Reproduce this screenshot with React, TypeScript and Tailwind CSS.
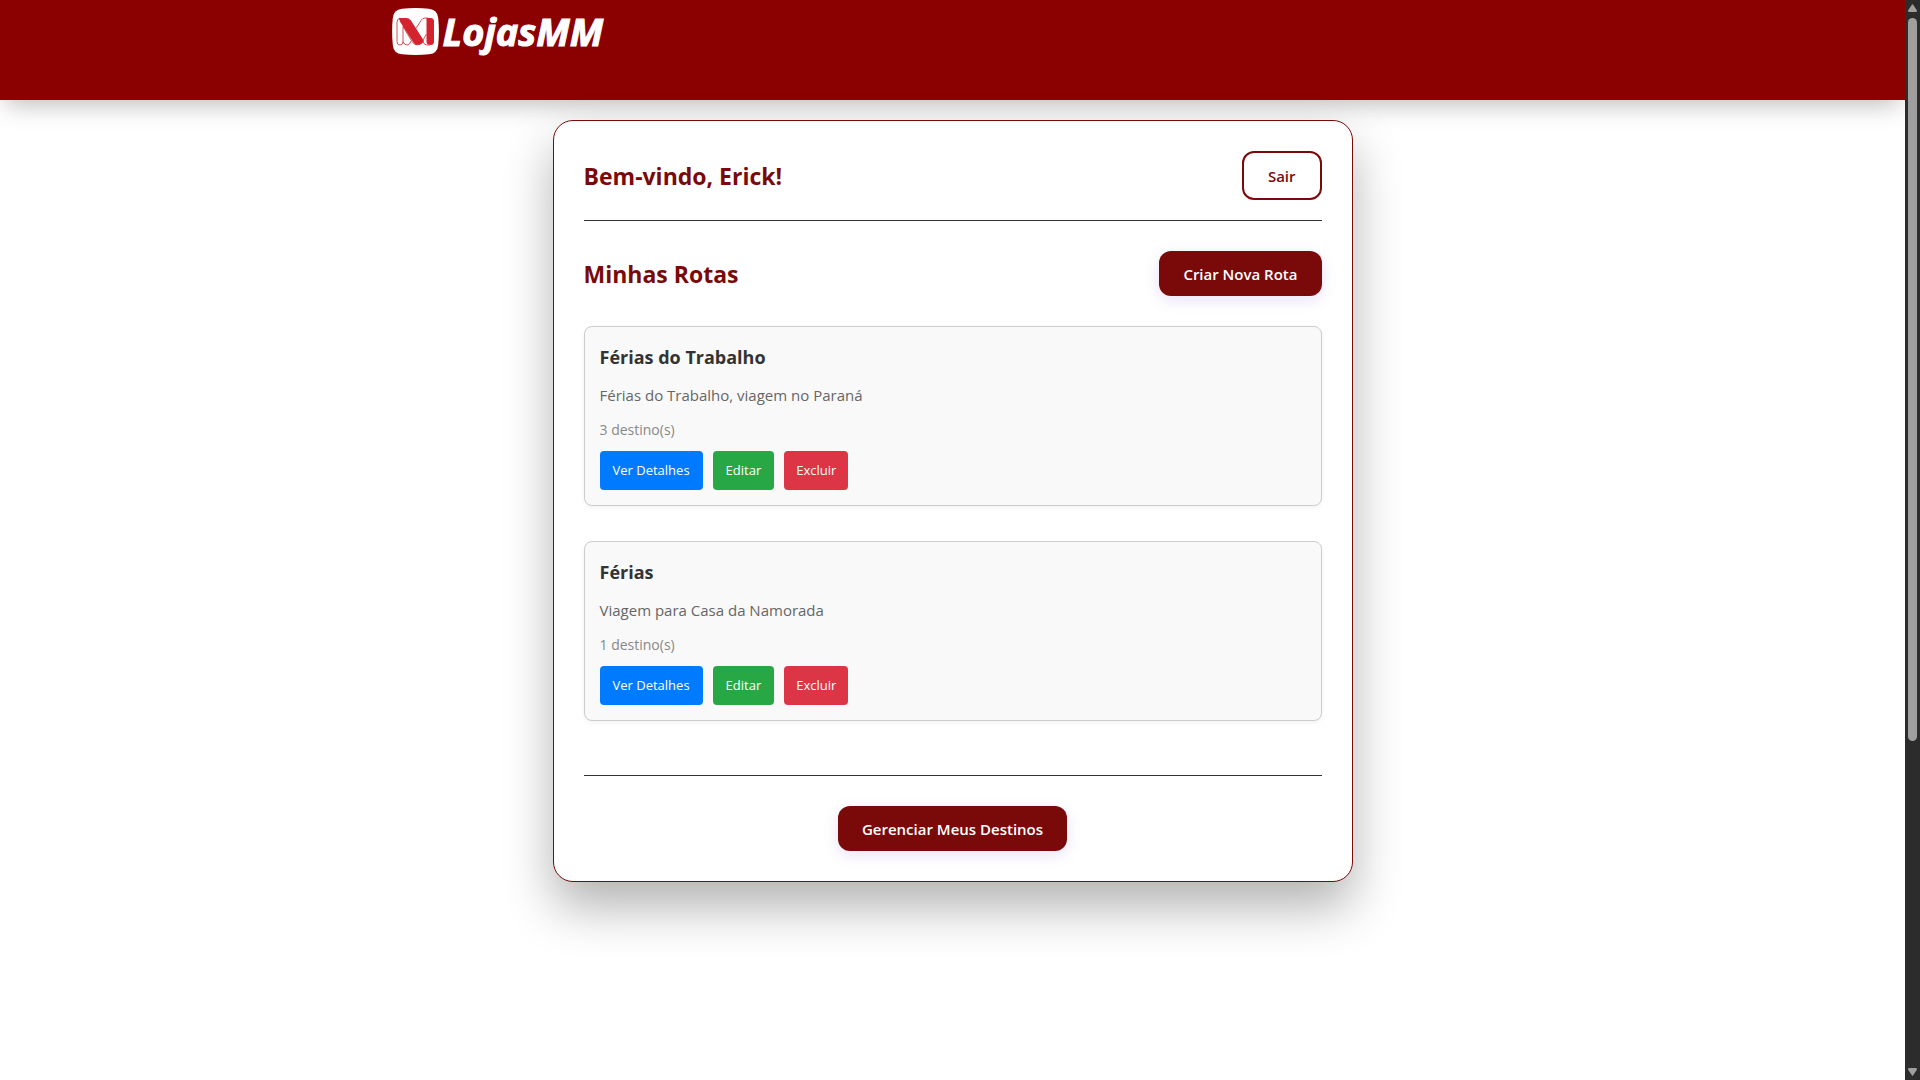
import React from "react";

type Route = { id: number; name: string; description: string; count: number };

const routes: Route[] = [
  { id: 1, name: "Férias do Trabalho", description: "Férias do Trabalho, viagem no Paraná", count: 3 },
  { id: 2, name: "Férias", description: "Viagem para Casa da Namorada", count: 1 },
];

function Logo() {
  return (
    <a href="#" aria-label="LojasMM" className="flex items-center gap-1 text-white">
      <svg viewBox="0 0 47 47" className="size-[47px] shrink-0" aria-hidden="true">
        <path d="M10 0.7Q23.5 -0.7 37 0.7Q45.5 1.5 46.2 10Q47.6 23.5 46.2 37Q45.5 45.5 37 46.3Q23.5 47.7 10 46.3Q1.5 45.5 0.8 37Q-0.6 23.5 0.8 10Q1.5 1.5 10 0.7Z" fill="white" />
        <path d="M7 10H14.5Q17.5 10 19 12.5L32 33Q29.500 37 26 37Q23 37 21.500 34.500L8.500 14.500Q7 12 7 10Z" fill="#d2232f" />
        <path d="M34.500 10H38.500Q42 10 42 13.500V33.500Q42 37 38.500 37Q34.500 37 34.500 33.500Z" fill="#d2232f" />
        <path d="M8 10Q5 11 5 14V33.500Q5 37 8 37T11 33.500V18.500L20 33.500Q22 37 25.500 37M11 33.500Q12 37 15 37T19 33M24 20.500L29 12.500Q30.500 10 33 10H36M30 33.500L34.500 26M31 33.500Q32 37 35 37H38" fill="none" stroke="#d2232f" strokeWidth="0.8" />
      </svg>
      <span className="font-['Open_Sans',sans-serif] text-[38px] leading-[47px] font-bold italic [-webkit-text-stroke:1px_white]">LojasMM</span>
    </a>
  );
}

function PrimaryButton({ children }: { children: React.ReactNode }) {
  return (
    <button type="button" className="rounded-xl bg-[#7a0909] px-6 pt-[13px] pb-[11px] text-[15px] leading-[21px] font-semibold text-white shadow-[0_4px_15px_rgba(102,51,204,0.15)]">
      {children}
    </button>
  );
}

function RouteCard({ route }: { route: Route }) {
  const action = "rounded py-2 text-[13px] leading-[23px] text-white";
  return (
    <li className="rounded-lg border border-[#ccc] bg-[#f9f9f9] p-[15px] shadow-[0_2px_4px_rgba(0,0,0,0.05)]">
      <h3 className="text-lg leading-[30px] font-bold text-[#333]">{route.name}</h3>
      <p className="mt-[9px] text-[15px] leading-7 text-[#666]">{route.description}</p>
      <p className="mt-[9px] text-sm leading-6 text-[#888]">{route.count} destino(s)</p>
      <div className="mt-[9px] flex gap-[10px]">
        <a href="#" className={`${action} bg-[#007bff] px-[13px]`}>Ver Detalhes</a>
        <a href="#" className={`${action} bg-[#28a745] px-[13px]`}>Editar</a>
        <button type="button" className={`${action} bg-[#dc3545] px-3`}>Excluir</button>
      </div>
    </li>
  );
}

function ScrollTrack() {
  return (
    <div className="flex w-[15px] shrink-0 flex-col items-center bg-[#2c2c2c] py-1" aria-hidden="true">
      <svg viewBox="0 0 9 8" className="h-2 w-[9px] shrink-0"><path d="M4 .5Q4.5 0 5 .5L9 6.5Q9 8 8 8H1Q0 8 0 6.5Z" fill="#9f9f9f" /></svg>
      <div className="flex w-full grow flex-col items-center py-1.5">
        <div className="w-[9px] grow-9 rounded-full bg-[#9f9f9f]" />
        <div className="grow-4" />
      </div>
      <svg viewBox="0 0 9 8" className="h-2 w-[9px] shrink-0"><path d="M4 7.5Q4.5 8 5 7.5L9 1.5Q9 0 8 0H1Q0 0 0 1.5Z" fill="#9f9f9f" /></svg>
    </div>
  );
}

export default function App() {
  return (
    <div className="flex h-screen overflow-hidden bg-white font-['Segoe_UI','Open_Sans',sans-serif]">
      <div className="min-w-0 grow overflow-hidden">
        <header className="h-[100px] bg-[#8b0000] shadow-[0_10px_24px_-6px_rgba(0,0,0,0.28)]">
          <div className="mx-auto flex max-w-[1122px] pt-2">
            <Logo />
          </div>
        </header>
        <main className="relative mx-auto mt-5 max-w-[800px] rounded-[20px] border border-[#7a0909] bg-white p-[30px] shadow-[0_25px_50px_rgba(0,0,0,0.3)]">
          <div className="flex items-center justify-between border-b border-[#333] pb-5">
            <h1 className="text-[23px] leading-8 font-bold text-[#7a0909]">Bem-vindo, Erick!</h1>
            <button type="button" className="rounded-xl border-2 border-[#7a0909] px-6 pt-[13px] pb-[11px] text-[15px] leading-[21px] font-semibold text-[#7a0909]">Sair</button>
          </div>
          <section className="border-b border-[#333] pt-[30px] pb-[54px]">
            <div className="flex items-center justify-between">
              <h2 className="text-[23px] leading-8 font-bold text-[#7a0909]">Minhas Rotas</h2>
              <PrimaryButton>Criar Nova Rota</PrimaryButton>
            </div>
            <ul className="mt-[30px] flex flex-col gap-[35px]">
              {routes.map((route) => <RouteCard key={route.id} route={route} />)}
            </ul>
          </section>
          <div className="flex justify-center pt-[30px]">
            <PrimaryButton>Gerenciar Meus Destinos</PrimaryButton>
          </div>
        </main>
      </div>
      <ScrollTrack />
    </div>
  );
}
